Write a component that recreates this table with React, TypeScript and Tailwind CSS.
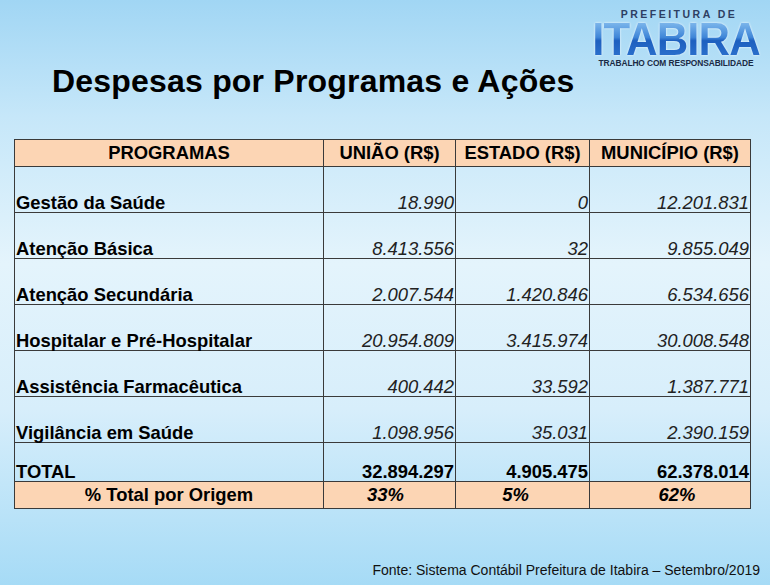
import React from 'react';

interface Row {
  programa: string;
  uniao: string;
  estado: string;
  municipio: string;
}

const rows: Row[] = [
  { programa: 'Gestão da Saúde', uniao: '18.990', estado: '0', municipio: '12.201.831' },
  { programa: 'Atenção Básica', uniao: '8.413.556', estado: '32', municipio: '9.855.049' },
  { programa: 'Atenção Secundária', uniao: '2.007.544', estado: '1.420.846', municipio: '6.534.656' },
  { programa: 'Hospitalar e Pré-Hospitalar', uniao: '20.954.809', estado: '3.415.974', municipio: '30.008.548' },
  { programa: 'Assistência Farmacêutica', uniao: '400.442', estado: '33.592', municipio: '1.387.771' },
  { programa: 'Vigilância em Saúde', uniao: '1.098.956', estado: '35.031', municipio: '2.390.159' },
];

const cell = 'border-[1.5px] border-[#3a3a3a] align-bottom leading-[18px] p-0 whitespace-nowrap';

const Logo: React.FC = () => (
  <div className="flex flex-col items-center gap-[2px] mt-[9px] mr-[14px] w-[160px]">
    <span className="text-[10.5px] leading-[11px] tracking-[2.5px] text-[#2d3f63] font-bold pl-[6px]">
      PREFEITURA DE
    </span>
    <span className="inline-block scale-x-[0.93] text-[47px] leading-[34px] font-black tracking-[-1px] bg-clip-text text-transparent bg-[linear-gradient(180deg,#7fb8ec_0%,#3f86d8_45%,#1d5fbf_55%,#2a6fcc_100%)] drop-shadow-[0_0_1px_rgba(255,255,255,0.9)]">
      ITABIRA
    </span>
    <span className="text-[8.4px] leading-[10px] text-[#1a2a44] font-semibold whitespace-nowrap tracking-[-0.1px]">
      TRABALHO COM RESPONSABILIDADE
    </span>
  </div>
);

const App: React.FC = () => {
  return (
    <div
      className="w-[770px] h-[585px] overflow-hidden flex flex-col bg-[linear-gradient(180deg,#a1d6f4_0%,#c6e7f9_20%,#e4f4fc_45%,#d7eefb_70%,#a6dbf6_100%)] text-black"
      style={{ fontFamily: '"Liberation Sans", Arial, sans-serif' }}
    >
      {/* Header */}
      <div className="flex justify-between items-start">
        <h1 className="mt-[62px] ml-[52px] text-[32px] leading-[38px] font-bold tracking-[0.2px] whitespace-nowrap">
          Despesas por Programas e Ações
        </h1>
        <Logo />
      </div>

      {/* Table */}
      <div className="mt-[39px] ml-[14px]">
        <table className="table-fixed border-collapse w-[736px] text-[18.4px]">
          <colgroup>
            <col className="w-[309px]" />
            <col className="w-[132px]" />
            <col className="w-[134px]" />
            <col className="w-[161px]" />
          </colgroup>
          <thead>
            <tr className="h-[27px] bg-[#fcd5b4] font-bold">
              <th className={`${cell} text-center align-middle`}>PROGRAMAS</th>
              <th className={`${cell} text-center align-middle`}>UNIÃO (R$)</th>
              <th className={`${cell} text-center align-middle`}>ESTADO (R$)</th>
              <th className={`${cell} text-center align-middle`}>MUNICÍPIO (R$)</th>
            </tr>
          </thead>
          <tbody>
            {rows.map((r) => (
              <tr key={r.programa} className="h-[46px]">
                <td className={`${cell} font-bold pl-[1px]`}>{r.programa}</td>
                <td className={`${cell} italic text-right pr-[1px] text-[#222]`}>{r.uniao}</td>
                <td className={`${cell} italic text-right pr-[1px] text-[#222]`}>{r.estado}</td>
                <td className={`${cell} italic text-right pr-[1px] text-[#222]`}>{r.municipio}</td>
              </tr>
            ))}
            <tr className="h-[39px] font-bold">
              <td className={`${cell} pl-[1px]`}>TOTAL</td>
              <td className={`${cell} text-right pr-[1px]`}>32.894.297</td>
              <td className={`${cell} text-right pr-[1px]`}>4.905.475</td>
              <td className={`${cell} text-right pr-[1px]`}>62.378.014</td>
            </tr>
            <tr className="h-[27px] bg-[#fcd5b4] font-bold">
              <td className={`${cell} text-center align-middle`}>% Total por Origem</td>
              <td className={`${cell} italic text-center align-middle pr-[8px]`}>33%</td>
              <td className={`${cell} italic text-center align-middle pr-[14px]`}>5%</td>
              <td className={`${cell} italic text-center align-middle pl-[14px]`}>62%</td>
            </tr>
          </tbody>
        </table>
      </div>

      {/* Footer */}
      <div className="mt-auto mb-[6px] mr-[10px] self-end text-[14px] leading-[18px] text-[#111]">
        Fonte: Sistema Contábil Prefeitura de Itabira – Setembro/2019
      </div>
    </div>
  );
};

export default App;
